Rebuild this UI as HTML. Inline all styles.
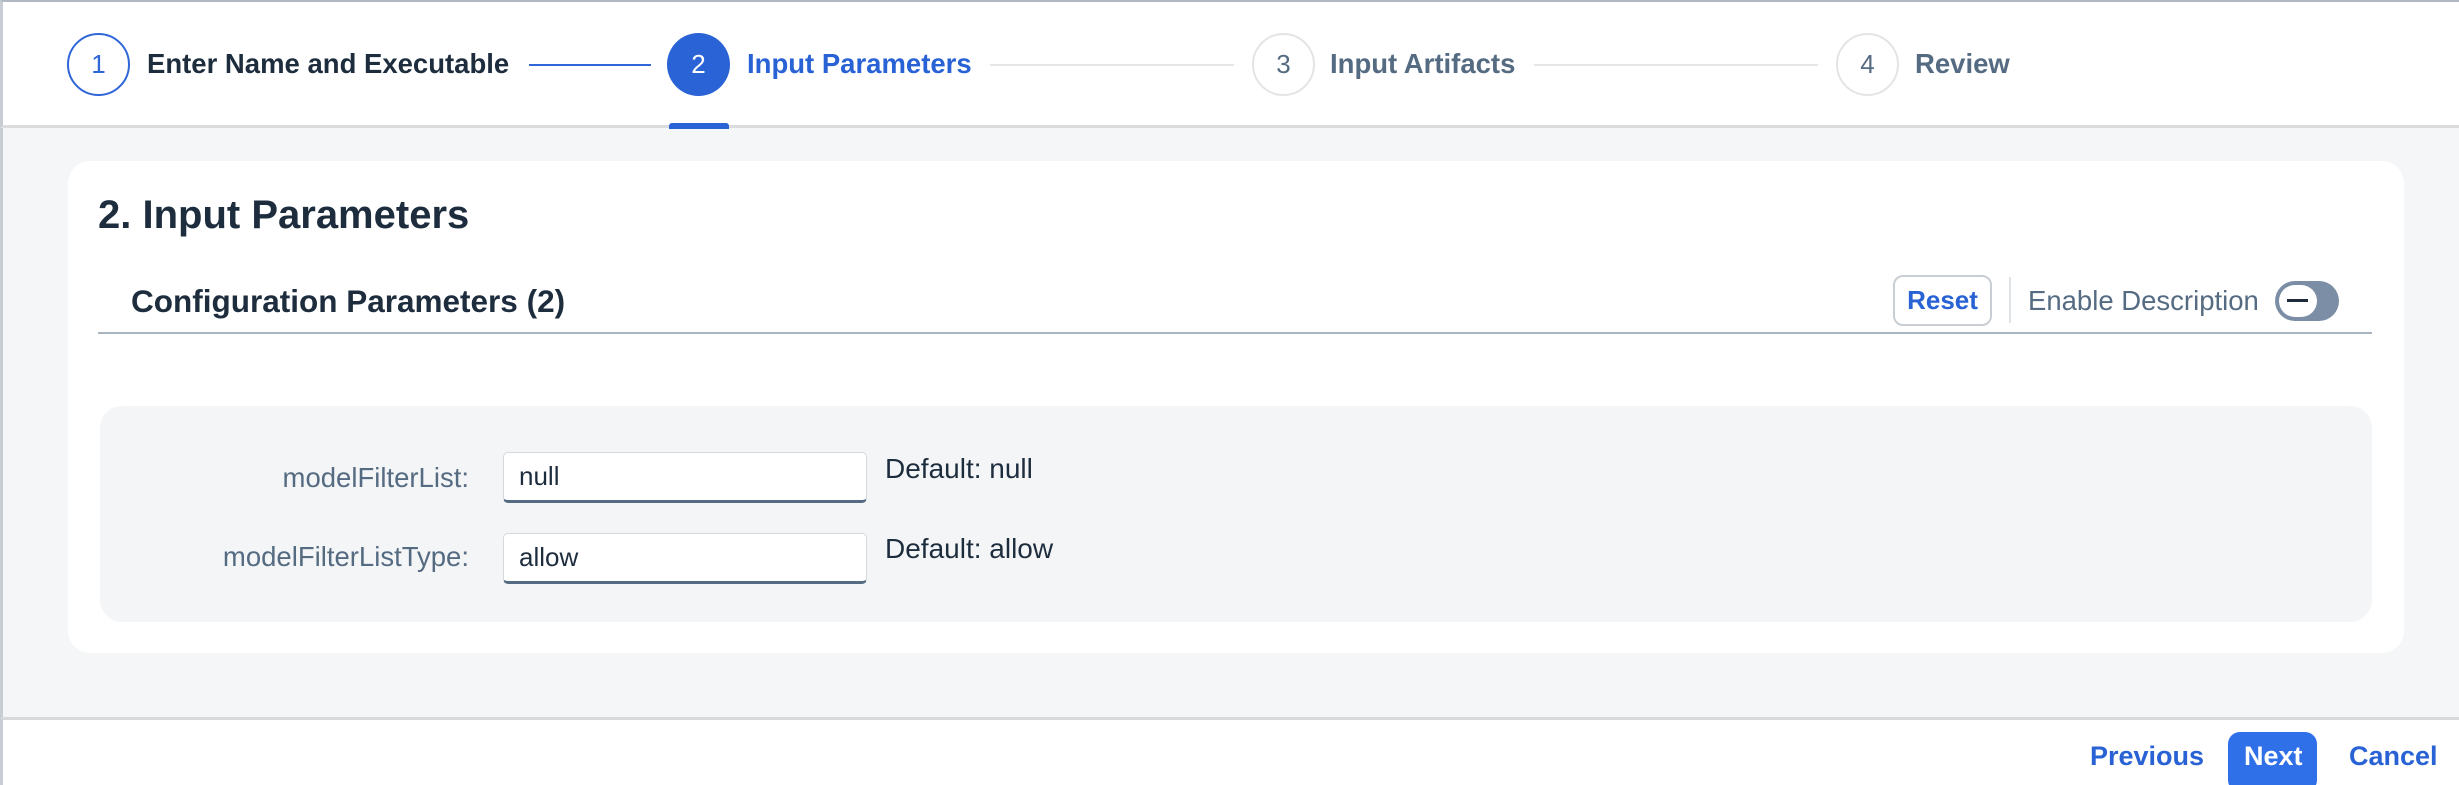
<!DOCTYPE html>
<html><head><meta charset="utf-8"><style>
*{box-sizing:border-box;margin:0;padding:0}
html,body{width:2459px;height:785px;overflow:hidden;background:#f5f6f7;font-family:"Liberation Sans",sans-serif;position:relative}
.abs{position:absolute}
.hdr{left:0;top:0;width:2459px;height:128px;background:#fff;border-top:2px solid #b0b8c2;border-left:3px solid #c8cdd3;border-bottom:3px solid #dadcde}
.circ{position:absolute;width:63px;height:63px;border-radius:50%;top:33px;font-size:26px;display:flex;align-items:center;justify-content:center}
.lbl{position:absolute;top:47px;font-size:27.5px;font-weight:bold;white-space:nowrap;line-height:34px}
.line{position:absolute;top:64px;height:2px}
.leftb{left:0;top:128px;width:3px;height:590px;background:#c8cdd3}
.card{left:68px;top:161px;width:2336px;height:492px;background:#fff;border-radius:22px}
.panel{left:100px;top:406px;width:2272px;height:216px;background:#f4f5f7;border-radius:22px}
.inp{position:absolute;left:503px;width:364px;height:51px;background:#fff;border:1px solid #d5d9de;border-bottom:3px solid #556b82;border-radius:5px;font-size:26px;padding-left:15px;line-height:46px;color:#1d2d3e}
.fl{position:absolute;font-size:27.5px;color:#556b82;text-align:right;right:calc(2459px - 469px);white-space:nowrap}
.df{position:absolute;left:885px;font-size:28px;color:#1d2d3e;white-space:nowrap}
.foot{left:0;top:717px;width:2459px;height:68px;background:#fff;border-top:3px solid #d8d9db;border-left:3px solid #c8cdd3}
.fb{position:absolute;font-size:27px;font-weight:bold;color:#2862d4;top:741px}
</style></head><body>
<div class="abs hdr"></div>
<div class="circ" style="left:67px;border:2px solid #2f66d8;color:#2f66d8">1</div>
<div class="lbl" style="left:147px;color:#1d2d3e">Enter Name and Executable</div>
<div class="line" style="left:529px;width:122px;background:#2f66d8"></div>
<div class="circ" style="left:667px;background:#2a63d6;color:#fff">2</div>
<div class="lbl" style="left:747px;color:#2862d4">Input Parameters</div>
<div class="abs" style="left:669px;top:123px;width:60px;height:6px;background:#2a63d6;border-radius:3px 3px 0 0"></div>
<div class="line" style="left:990px;width:244px;background:#e5e6e7"></div>
<div class="circ" style="left:1252px;border:2px solid #e3e4e6;color:#556b82">3</div>
<div class="lbl" style="left:1330px;color:#556b82">Input Artifacts</div>
<div class="line" style="left:1534px;width:284px;background:#e5e6e7"></div>
<div class="circ" style="left:1836px;border:2px solid #e3e4e6;color:#556b82">4</div>
<div class="lbl" style="left:1915px;color:#556b82">Review</div>
<div class="abs leftb"></div>
<div class="abs card"></div>
<div class="abs" style="left:98px;top:193px;font-size:40px;font-weight:bold;color:#1d2d3e">2. Input Parameters</div>
<div class="abs" style="left:131px;top:283px;font-size:31.5px;font-weight:bold;color:#1d2d3e">Configuration Parameters (2)</div>
<div class="abs" style="left:98px;top:332px;width:2274px;height:2px;background:#a9b4be"></div>
<div class="abs" style="left:1893px;top:275px;width:99px;height:51px;border:2px solid #c9ced4;border-radius:10px;font-size:26px;font-weight:bold;color:#2862d4;text-align:center;line-height:46px">Reset</div>
<div class="abs" style="left:2009px;top:277px;width:2px;height:46px;background:#e1e4e7"></div>
<div class="abs" style="left:2028px;top:285px;font-size:27.5px;color:#556b82">Enable Description</div>
<div class="abs" style="left:2275px;top:281px;width:64px;height:40px;background:#7b8ea5;border-radius:20px"></div>
<div class="abs" style="left:2279px;top:285px;width:38px;height:32px;background:#fff;border-radius:16px"></div>
<div class="abs" style="left:2287px;top:299px;width:21px;height:3px;background:#1d2d3e"></div>
<div class="abs panel"></div>
<div class="fl" style="top:462px">modelFilterList:</div>
<div class="inp" style="top:452px">null</div>
<div class="df" style="top:453px">Default: null</div>
<div class="fl" style="top:541px">modelFilterListType:</div>
<div class="inp" style="top:533px">allow</div>
<div class="df" style="top:533px">Default: allow</div>
<div class="abs foot"></div>
<div class="fb" style="left:2090px">Previous</div>
<div class="abs" style="left:2228px;top:732px;width:89px;height:60px;background:#2f6fe8;border-radius:12px"></div>
<div class="fb" style="left:2244px;color:#fff">Next</div>
<div class="fb" style="left:2349px">Cancel</div>
</body></html>
